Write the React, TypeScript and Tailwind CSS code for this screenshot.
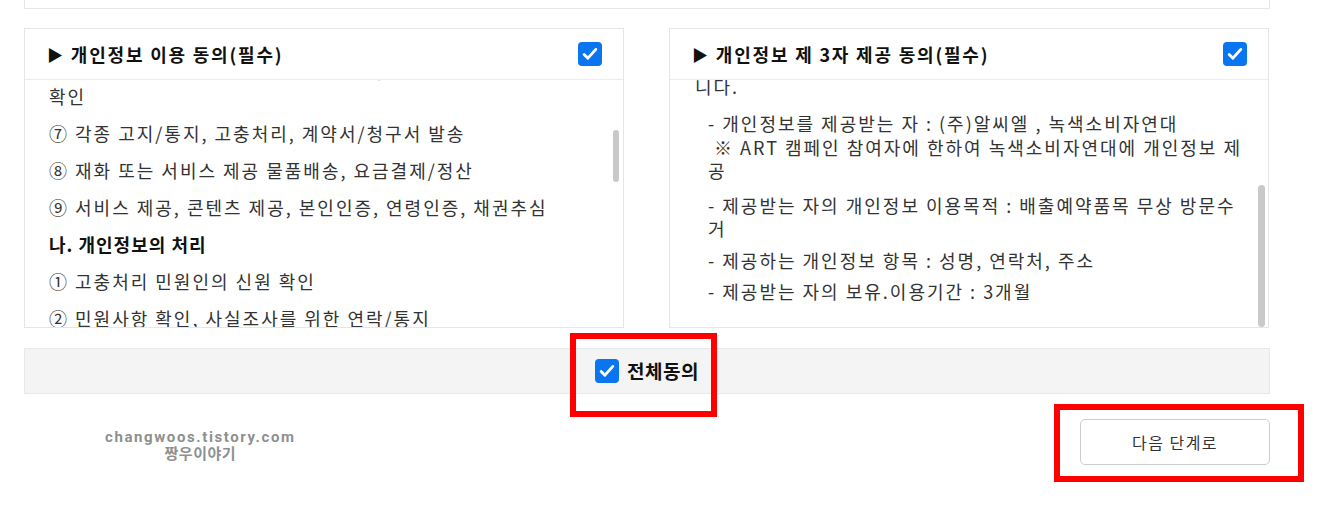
import React from 'react'

const font = "font-['Noto_Sans_CJK_KR','Noto_Sans',sans-serif]"

function CheckBox() {
  return (
    <div className="flex h-6 w-6 shrink-0 items-center justify-center rounded-[4px] bg-[#0a75f0]">
      <svg viewBox="0 0 24 24" className="h-[20px] w-[20px]" fill="none">
        <path
          d="M5 12.5l4.5 4.5L19 6.5"
          stroke="#fff"
          strokeWidth="3.4"
          strokeLinecap="round"
          strokeLinejoin="round"
        />
      </svg>
    </div>
  )
}

function CardHeader({ title }: { title: string }) {
  return (
    <div className="flex h-[51px] shrink-0 items-center justify-between border-b border-[#ececec] pl-[22px] pr-[21px]">
      <div className="flex items-center gap-[6px] text-[18px] font-bold tracking-[1.8px] text-[#111]">
        <span className="text-[16px]">▶</span>
        <span>{title}</span>
      </div>
      <CheckBox />
    </div>
  )
}

function UsageCard() {
  const rows = [
    '⑦ 각종 고지/통지, 고충처리, 계약서/청구서 발송',
    '⑧ 재화 또는 서비스 제공 물품배송, 요금결제/정산',
    '⑨ 서비스 제공, 콘텐츠 제공, 본인인증, 연령인증, 채권추심'
  ]
  return (
    <div className="flex h-[300px] w-[600px] flex-col border border-[#e6e6e6] bg-white">
      <CardHeader title="개인정보 이용 동의(필수)" />
      <div className="relative flex-1 overflow-hidden">
        <div className="mt-[-20px] space-y-[13px] pl-[24px] pr-[30px] text-[18px] leading-[24px] tracking-[2px] text-[#333]">
          <p className="whitespace-nowrap">
            <span className="relative -top-[3px]">⑥ 회원제 서비스 이용에 따른 본인확인, 개인 식별</span>
            <br />
            확인
          </p>
          {rows.map((r) => (
            <p key={r} className="whitespace-nowrap">
              {r}
            </p>
          ))}
          <p className="font-bold tracking-[1px] text-[#111]">나. 개인정보의 처리</p>
          <p>① 고충처리 민원인의 신원 확인</p>
          <p>② 민원사항 확인, 사실조사를 위한 연락/통지</p>
          <p>③ 처리결과 통보</p>
        </div>
        {/* fake scrollbar thumb */}
        <div className="absolute right-[4px] top-[50px] h-[52px] w-[6px] rounded-full bg-[#c9c9c9]" />
      </div>
    </div>
  )
}

function ThirdPartyCard() {
  return (
    <div className="flex h-[300px] w-[600px] flex-col border border-[#e6e6e6] bg-white">
      <CardHeader title="개인정보 제 3자 제공 동의(필수)" />
      <div className="relative flex-1 overflow-hidden">
        <div className="mt-[-29px] pl-[25px] pr-[30px] text-[18px] leading-[23.5px] tracking-[2px] text-[#333]">
          <p className="whitespace-nowrap">
            회사는 고객의 동의를 받아 아래와 같이 개인정보를 제공합
            <br />
            니다.
          </p>
          <div className="mt-[14px] pl-[13px]">
            <p className="whitespace-nowrap">
              - 개인정보를 제공받는 자 : (주)알씨엘 , 녹색소비자연대
              <br />
              <span className="pl-[6px]">※ ART 캠페인 참여자에 한하여 녹색소비자연대에 개인정보 제</span>
              <br />공
            </p>
            <p className="mt-[11px] whitespace-nowrap">
              - 제공받는 자의 개인정보 이용목적 : 배출예약품목 무상 방문수
              <br />거
            </p>
            <p className="mt-[8px] whitespace-nowrap">- 제공하는 개인정보 항목 : 성명, 연락처, 주소</p>
            <p className="mt-[8px] whitespace-nowrap">- 제공받는 자의 보유.이용기간 : 3개월</p>
          </div>
        </div>
        <div className="absolute right-[3px] top-[105px] h-[142px] w-[7px] rounded-full bg-[#c9c9c9]" />
      </div>
    </div>
  )
}

export default function App() {
  return (
    <div className={`relative h-[520px] w-[1341px] overflow-hidden bg-white ${font}`}>
      <div className="ml-[24px] w-[1246px]">
        <div className="h-[9px] border-x border-b border-[#e6e6e6]" />

        <div className="mt-[19px] flex gap-[45px]">
          <UsageCard />
          <ThirdPartyCard />
        </div>

        <div className="mt-[20px] flex h-[46px] items-center justify-center gap-[8px] border border-[#e9e9e9] bg-[#f4f4f4]">
          <CheckBox />
          <span className="text-[19px] font-bold tracking-[0.5px] text-[#111]">전체동의</span>
        </div>

        <div className="mt-[25px] flex items-start justify-between">
          <div className="ml-[81px] mt-[11px] flex flex-col items-center text-[15px] font-bold leading-[15px] text-[#8f8f8f]">
            <span className="font-['Roboto',sans-serif] tracking-[1.6px]">changwoos.tistory.com</span>
            <span className="text-[15px] tracking-[0.5px]">짱우이야기</span>
          </div>
          <button className="h-[46px] w-[190px] rounded-[5px] border border-[#cccccc] bg-white text-[16px] tracking-[1.5px] text-[#333]">
            다음 단계로
          </button>
        </div>
      </div>

      {/* red highlight frames */}
      <div className="absolute left-[570px] top-[333px] h-[84px] w-[147px] border-[6px] border-[#ff0000]" />
      <div className="absolute left-[1054px] top-[404px] h-[78px] w-[250px] border-[6px] border-[#ff0000]" />
    </div>
  )
}
